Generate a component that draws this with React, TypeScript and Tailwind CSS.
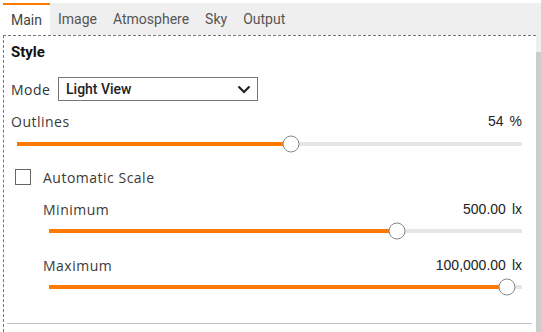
import React from 'react';

const tabs = ['Main', 'Image', 'Atmosphere', 'Sky', 'Output'];

function Slider({ pct }: { pct: number }) {
  return (
    <div className="relative h-[20px] flex items-center">
      <div className="relative h-[4px] w-full bg-[#e6e6e6]">
        <div className="absolute left-0 top-0 h-full bg-[#ff7800]" style={{ width: `${pct}%` }} />
        <div
          className="absolute top-1/2 h-[17px] w-[17px] -translate-x-1/2 -translate-y-1/2 rounded-full border border-[#8a8a8a] bg-white"
          style={{ left: `${pct}%` }}
        />
      </div>
    </div>
  );
}

function ValueRow({ label, value, unit }: { label: string; value: string; unit: string }) {
  return (
    <div className="flex h-[20px] items-center justify-between">
      <span className="font-['Open_Sans',sans-serif] text-[14px] tracking-[0.5px] text-[#3a3a3a]">{label}</span>
      <span className="font-['Liberation_Sans',Arial,sans-serif] text-[14px] text-[#222]">
        {value}
        <span className="ml-[6px]">{unit}</span>
      </span>
    </div>
  );
}

export default function App() {
  return (
    <div className="h-[332px] w-[541px] overflow-hidden bg-white pl-[3px] pt-[3px]">
      {/* tab bar */}
      <div className="flex h-[32px] bg-[#efefef] font-['Roboto',sans-serif] text-[14px] text-[#555]">
        {tabs.map((t, i) => (
          <div
            key={t}
            className={
              i === 0
                ? 'flex items-center border-t-[2px] border-[#ff7800] bg-white px-[8px] text-[#444]'
                : 'flex items-center px-[8px]'
            }
          >
            {t}
          </div>
        ))}
      </div>

      <div className="flex h-[297px]">
        <div className="flex-1 border-l border-t border-dashed border-[#777]">
          <div className="pl-[7px]">
            <div className="flex h-[32px] items-center font-['Roboto',sans-serif] text-[15px] font-bold text-[#111]">
              Style
            </div>

            <div className="mt-[9px] flex h-[24px] items-center">
              <span className="w-[47px] font-['Open_Sans',sans-serif] text-[14px] tracking-[0.5px] text-[#333]">Mode</span>
              <div className="flex h-[24px] w-[200px] items-center justify-between border border-[#777] pl-[7px] pr-[6px]">
                <span className="font-['Roboto',sans-serif] text-[14px] font-medium text-[#222]">Light View</span>
                <svg width="14" height="9" viewBox="0 0 14 9" fill="none">
                  <path d="M1.5 1.5 7 7l5.5-5.5" stroke="#222" strokeWidth="2.2" />
                </svg>
              </div>
            </div>

            <div className="mt-[10px] pr-[14px]">
              <ValueRow label="Outlines" value="54" unit="%" />
            </div>
            <div className="mt-[3px] pl-[6px] pr-[14px]">
              <Slider pct={54.3} />
            </div>

            <div className="mt-[13px] flex h-[20px] items-center">
              <div className="ml-[4px] h-[16px] w-[16px] border border-[#666]" />
              <span className="ml-[12px] font-['Open_Sans',sans-serif] text-[14px] tracking-[0.5px] text-[#3a3a3a]">
                Automatic Scale
              </span>
            </div>

            <div className="pl-[32px] pr-[14px]">
              <div className="mt-[12px]">
                <ValueRow label="Minimum" value="500.00" unit="lx" />
              </div>
              <div className="mt-[2px] pl-[6px]">
                <Slider pct={73.6} />
              </div>
              <div className="mt-[14px]">
                <ValueRow label="Maximum" value="100,000.00" unit="lx" />
              </div>
              <div className="mt-[2px] pl-[6px]">
                <Slider pct={96.8} />
              </div>
            </div>
          </div>
          <div className="ml-[3px] mr-[4px] mt-[26px] h-px bg-[#c4c4c4]" />
        </div>

        {/* scrollbar */}
        <div className="flex w-[5px] flex-col bg-[#efefef]">
          <div className="h-[17px]" />
          <div className="flex-1 bg-[#cdcdcd]" />
        </div>
      </div>
    </div>
  );
}
